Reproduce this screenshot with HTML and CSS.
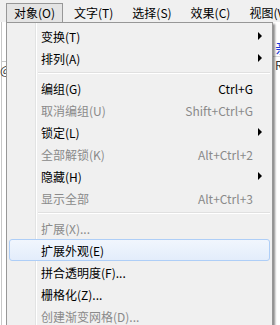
FILE: index.html
```html
<!DOCTYPE html>
<html lang="zh-CN">
<head>
<meta charset="utf-8">
<title>对象菜单</title>
<link rel="stylesheet" href="styles.css">
</head>
<body>
<div class="window">
  <div class="menubar">
    <span class="mb-item active">对象(O)</span>
    <span class="mb-item">文字(T)</span>
    <span class="mb-item">选择(S)</span>
    <span class="mb-item">效果(C)</span>
    <span class="mb-item">视图(V)</span>
  </div>
  <div class="page">
    <div class="left-panel">
      <div class="lp-box"></div>
      <div class="lp-at">@</div>
    </div>
    <div class="right-panel">
      <div class="rp-link">亲</div>
      <div class="rp-r">R</div>
    </div>
  </div>
  <ul class="menu">
    <li class="item"><span class="label">变换(T)</span><span class="key"></span><span class="sub"><i class="arrow"></i></span></li>
    <li class="item"><span class="label">排列(A)</span><span class="key"></span><span class="sub"><i class="arrow"></i></span></li>
    <li class="sep"></li>
    <li class="item"><span class="label">编组(G)</span><span class="key">Ctrl+G</span><span class="sub"></span></li>
    <li class="item disabled"><span class="label">取消编组(U)</span><span class="key">Shift+Ctrl+G</span><span class="sub"></span></li>
    <li class="item"><span class="label">锁定(L)</span><span class="key"></span><span class="sub"><i class="arrow"></i></span></li>
    <li class="item disabled"><span class="label">全部解锁(K)</span><span class="key">Alt+Ctrl+2</span><span class="sub"></span></li>
    <li class="item"><span class="label">隐藏(H)</span><span class="key"></span><span class="sub"><i class="arrow"></i></span></li>
    <li class="item disabled"><span class="label">显示全部</span><span class="key">Alt+Ctrl+3</span><span class="sub"></span></li>
    <li class="sep"></li>
    <li class="item disabled"><span class="label">扩展(X)...</span><span class="key"></span><span class="sub"></span></li>
    <li class="item hover"><span class="label">扩展外观(E)</span><span class="key"></span><span class="sub"></span></li>
    <li class="item"><span class="label">拼合透明度(F)...</span><span class="key"></span><span class="sub"></span></li>
    <li class="item"><span class="label">栅格化(Z)...</span><span class="key"></span><span class="sub"></span></li>
    <li class="item disabled"><span class="label">创建渐变网格(D)...</span><span class="key"></span><span class="sub"></span></li>
  </ul>
</div>
</body>
</html>
```

FILE: styles.css
```css
* { box-sizing: border-box; }
html, body { margin: 0; padding: 0; }
body {
  width: 280px;
  height: 325px;
  overflow: hidden;
  background: #f0f0f0;
  font-family: "Noto Sans CJK SC", "Microsoft YaHei", sans-serif;
  font-size: 12px;
  color: #000;
}
.window {
  position: relative;
  width: 280px;
  height: 325px;
  overflow: hidden;
}
.menubar {
  display: flex;
  gap: 3px;
  height: 22px;
  padding: 3px 0 0 6px;
  background: #f0f0f0;
  white-space: nowrap;
  overflow: hidden;
}
.mb-item {
  height: 19px;
  line-height: 18px;
  padding: 0 7px;
  border: 1px solid transparent;
  border-bottom: 0;
}
.mb-item.active {
  position: relative;
  z-index: 2;
  height: 20px;
  background: #e4e4e4;
  border-color: #979797;
}
.page {
  display: flex;
  justify-content: space-between;
  height: 303px;
  background: #fff;
}
.left-panel {
  width: 6px;
  border-left: 1px solid #c8c8c8;
  margin-left: 1px;
  display: flex;
  flex-direction: column;
}
.lp-box {
  height: 40px;
  border-bottom: 1px solid #c8c8c8;
}
.lp-at {
  font-size: 12px;
  line-height: 16px;
  margin-left: -2px;
  color: #333;
}
.right-panel {
  width: 7px;
  display: flex;
  flex-direction: column;
  padding-top: 16px;
  overflow: hidden;
}
.rp-link {
  color: #1a3bd6;
  font-size: 14px;
  line-height: 18px;
  padding-left: 2px;
  border-bottom: 1px solid #d8d8d8;
}
.rp-r {
  font-size: 12px;
  line-height: 16px;
  padding-left: 2px;
  color: #333;
}
.menu {
  position: absolute;
  z-index: 1;
  left: 6px;
  top: 22px;
  width: 267px;
  margin: 0;
  padding: 2px;
  list-style: none;
  border: 1px solid #979797;
  background:
    linear-gradient(to right, transparent 28px, #e2e3e3 28px, #e2e3e3 29px, #ffffff 29px, #ffffff 30px, transparent 30px),
    #f0f0f0;
  box-shadow: 2px 2px 2px rgba(0, 0, 0, 0.45);
}
.item {
  display: flex;
  align-items: center;
  height: 22px;
  border: 1px solid transparent;
  border-radius: 3px;
}
.label {
  flex: 1;
  padding-left: 31px;
  white-space: nowrap;
}
.key {
  white-space: nowrap;
}
.sub {
  width: 16px;
  display: flex;
  align-items: center;
  padding-left: 5px;
}
.arrow {
  width: 0;
  height: 0;
  border-top: 4px solid transparent;
  border-bottom: 4px solid transparent;
  border-left: 4px solid #000;
}
.disabled { color: #8a8a8a; }
.item.hover {
  border-color: #aeceF7;
  background: linear-gradient(#f1f6fd, #e3edfb);
}
.sep {
  height: 8px;
  margin-left: 29px;
  background: linear-gradient(transparent 3px, #e0e0e0 3px, #e0e0e0 4px, #ffffff 4px, #ffffff 5px, transparent 5px);
}
```
